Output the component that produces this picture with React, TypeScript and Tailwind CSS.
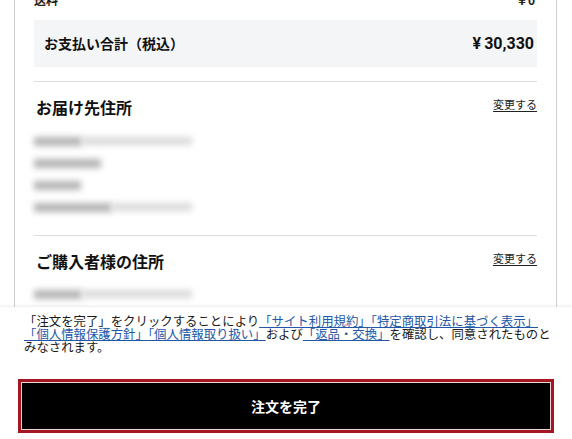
import React from 'react';

const jp = { fontFamily: '"Noto Sans CJK JP", "Noto Sans", sans-serif' };

function Blur({ dark, light }: { dark: number; light: number }) {
  return (
    <div className="flex h-[22px] items-center">
      <div className="h-[9px] bg-[#b4b4b4] blur-[3px]" style={{ width: dark }} />
      <div className="h-[8px] bg-[#dadada] blur-[3px]" style={{ width: light }} />
    </div>
  );
}

function SectionHead({ title }: { title: string }) {
  return (
    <div className="flex items-start justify-between pl-[2px]">
      <h2 className="text-[16px] font-bold leading-[22px] text-[#111]">{title}</h2>
      <a className="text-[11px] leading-[16px] text-[#222] underline underline-offset-2">変更する</a>
    </div>
  );
}

const links = 'text-[#2357a8] underline underline-offset-1';

export default function App() {
  return (
    <div className="flex h-[439px] w-[572px] flex-col overflow-hidden bg-white" style={jp}>
      <div className="min-h-0 flex-1 overflow-hidden">
        <div className="ml-[14px] mt-[-8px] w-[543px] border-x border-[#cfcfcf] px-[19px] pb-[40px]">
          <div className="flex h-[16px] items-center justify-between text-[12px] font-bold text-[#222]">
            <span>送料</span>
            <span className="pr-[2px]">￥0</span>
          </div>
          <div className="mt-[12px] flex h-[47px] items-center justify-between bg-[#f4f5f6] pl-[10px] pr-[3px]">
            <span className="text-[14px] font-bold text-[#111]">お支払い合計（税込）</span>
            <span className="text-[16px] font-bold text-[#111]" style={{ fontFamily: 'Roboto, "Noto Sans CJK JP", sans-serif' }}>
              ¥<span className="ml-[3px]">30,330</span>
            </span>
          </div>
          <div className="mt-[14px] border-t border-[#dcdcdc]" />
          <div className="pt-[14px]">
            <SectionHead title="お届け先住所" />
            <div className="mt-[12px]">
              <Blur dark={48} light={110} />
              <Blur dark={67} light={0} />
              <Blur dark={47} light={0} />
              <Blur dark={78} light={80} />
            </div>
          </div>
          <div className="mt-[17px] border-t border-[#dcdcdc]" />
          <div className="pt-[14px]">
            <SectionHead title="ご購入者様の住所" />
            <div className="mt-[11px]">
              <Blur dark={48} light={110} />
              <Blur dark={67} light={0} />
            </div>
          </div>
        </div>
      </div>
      <footer className="relative h-[132px] shrink-0 bg-white px-[18px] shadow-[0_-1px_3px_rgba(0,0,0,0.08)]">
        <p className="pl-[6px] pt-[8px] text-[12.4px] leading-[13px] text-[#1a1a1a]">
          <span className="whitespace-nowrap">
            「注文を完了」をクリックすることにより<a className={links}>「サイト利用規約」</a><a className={links}>「特定商取引法に基づく表示」</a>
          </span>
          <br />
          <span className="whitespace-nowrap">
            <a className={links}>「個人情報保護方針」</a><a className={links}>「個人情報取り扱い」</a>および<a className={links}>「返品・交換」</a>を確認し、同意されたものと
          </span>
          <br />
          みなされます。
        </p>
        <div className="mt-[25px] border-[3px] border-[#a31521] bg-[#e9d6d6] p-[1px]">
          <button className="flex h-[46px] w-full items-center justify-center bg-black text-[14px] font-bold text-white">
            注文を完了
          </button>
        </div>
      </footer>
    </div>
  );
}
